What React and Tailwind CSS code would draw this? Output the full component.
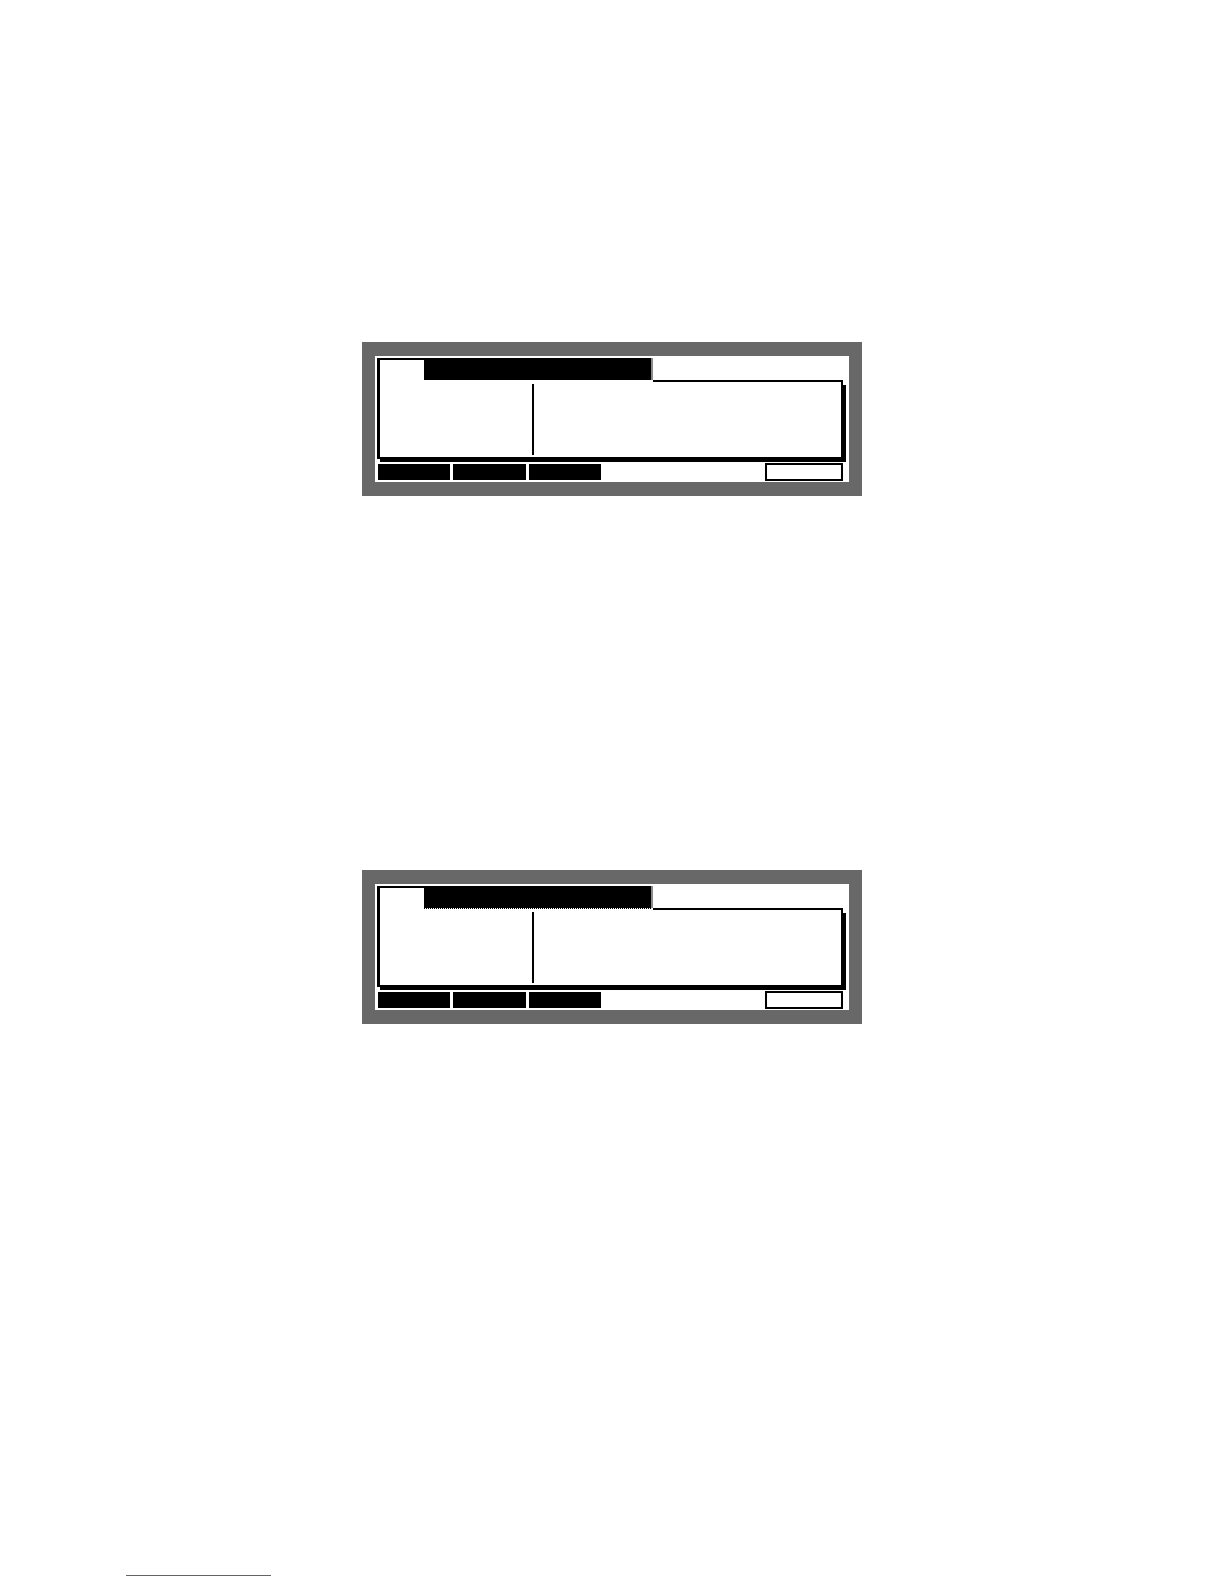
import React from "react";

// one LCD style screen panel
const Screen = ({ dotted }) => {
  return (
    <div className="w-[500px] bg-[#686868] pt-[14px] pb-[14px] px-[13px]">
      <div className="bg-white pt-[2px] pb-[1px] pl-[2px] pr-[6px] flex flex-col">
        {/* tab row */}
        <div className="flex h-[24px] w-[466px]">
          <div className="w-[47px] h-[24px] border-l-[3px] border-t-2 border-black"></div>
          <div className="w-[229px] self-start flex flex-col">
            <div className="h-[22px] bg-black border-r-2 border-r-[#8a8a8a]"></div>
            {dotted && <div className="w-[227px] h-px border-t border-dotted border-black"></div>}
          </div>
          <div className="flex-1 h-[24px] border-b-2 border-black"></div>
        </div>
        {/* body */}
        <div className="w-[466px] h-[77px] border-l-[3px] border-r-2 border-b-2 border-black shadow-[3px_3px_0_#000] flex">
          <div className="w-[152px]"></div>
          <div className="w-[2px] my-[2px] bg-black"></div>
          <div className="flex-1"></div>
        </div>
        {/* soft keys */}
        <div className="mt-[4px] h-[18px] w-[466px] flex items-center">
          <div className="ml-px flex gap-[3px]">
            <div className="w-[72px] h-[16px] bg-black"></div>
            <div className="w-[73px] h-[16px] bg-black"></div>
            <div className="w-[72px] h-[16px] bg-black"></div>
          </div>
          <div className="ml-auto w-[78px] h-[18px] border-2 border-black"></div>
        </div>
      </div>
    </div>
  );
};

const App = () => {
  return (
    <div className="w-[1224px] h-[1584px] bg-white relative font-['Liberation_Sans',sans-serif]">
      <div className="pt-[342px] pl-[362px]">
        <Screen />
        <div className="mt-[374px]">
          <Screen dotted />
        </div>
      </div>
      <div className="mt-[551px] ml-[126px] w-[145px] h-px bg-[#3f5fe0]"></div>
    </div>
  );
};

export default App;
